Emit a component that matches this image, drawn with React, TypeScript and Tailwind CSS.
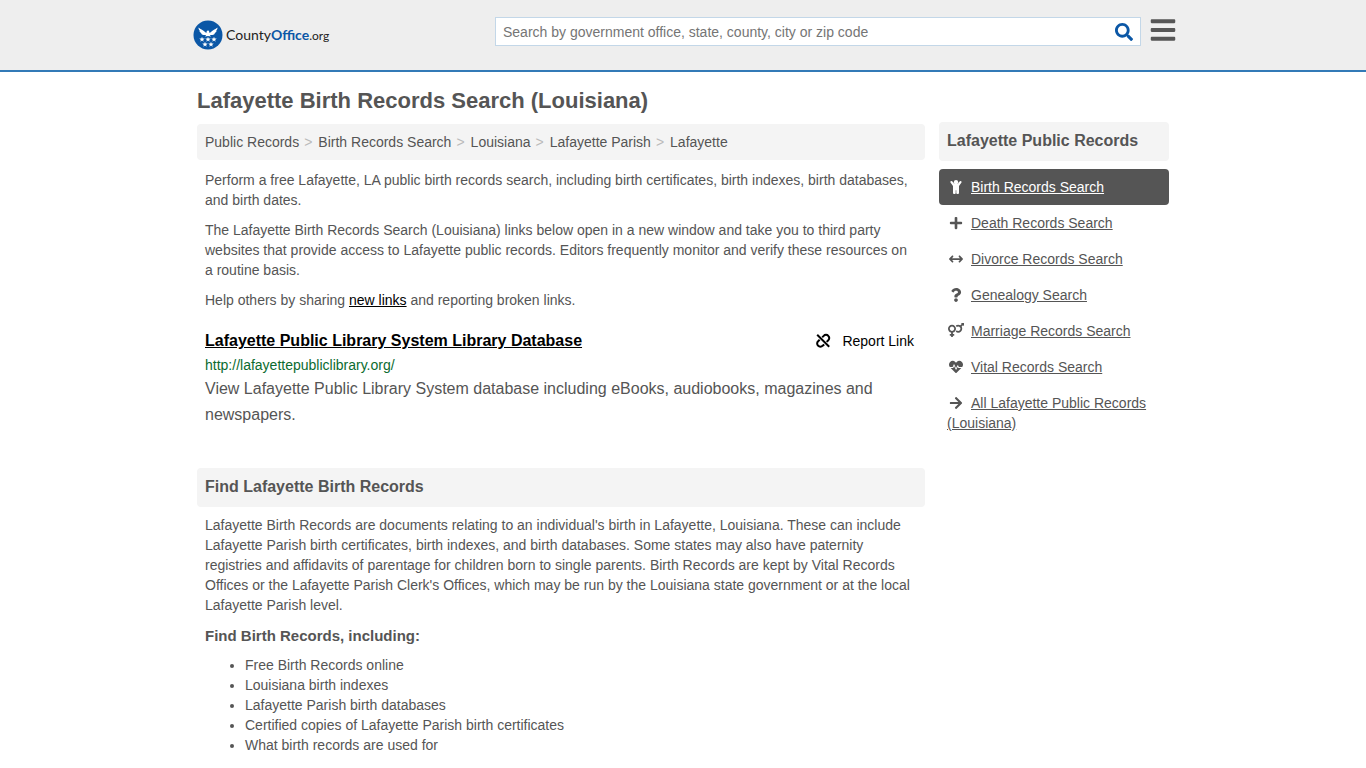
import type { ComponentType } from 'react';
import {
  FaArrowRight,
  FaBars,
  FaHeartbeat,
  FaPlus,
  FaQuestion,
  FaSearch,
  FaVenusMars,
} from 'react-icons/fa';
import { FaArrowsLeftRight } from 'react-icons/fa6';
import clsx from 'clsx';

type RecordLink = {
  label: string;
  icon: ComponentType<{ size?: number }>;
  size?: number;
  active?: boolean;
};

const BREADCRUMBS = [
  'Public Records',
  'Birth Records Search',
  'Louisiana',
  'Lafayette Parish',
  'Lafayette',
];

const RECORD_LINKS: RecordLink[] = [
  { label: 'Birth Records Search', icon: ChildIcon, active: true },
  { label: 'Death Records Search', icon: FaPlus },
  { label: 'Divorce Records Search', icon: FaArrowsLeftRight },
  { label: 'Genealogy Search', icon: FaQuestion },
  { label: 'Marriage Records Search', icon: FaVenusMars, size: 16 },
  { label: 'Vital Records Search', icon: FaHeartbeat },
  { label: 'All Lafayette Public Records (Louisiana)', icon: FaArrowRight },
];

const TOPICS = [
  'Free Birth Records online',
  'Louisiana birth indexes',
  'Lafayette Parish birth databases',
  'Certified copies of Lafayette Parish birth certificates',
  'What birth records are used for',
];

const STAR =
  'M0-2.800.700-.9 2.700-.9 1.100.4 1.700 2.300 0 1.100-1.700 2.300-1.100.4-2.700-.9-.7-.9Z';

export default function App() {
  return (
    <div className="bg-white font-['Liberation_Sans',Arial,sans-serif] text-sm leading-5 text-[#555]">
      <Header />
      <div className="mx-auto flex max-w-[980px] gap-3.5 px-1">
        <main className="min-w-0 flex-1 pt-[17px]">
          <h1 className="text-[22px] leading-6 font-bold">
            Lafayette Birth Records Search (Louisiana)
          </h1>
          <Breadcrumbs />
          <Intro />
          <Result />
          <About />
        </main>
        <Sidebar />
      </div>
    </div>
  );
}

function Header() {
  return (
    <header className="border-b-2 border-[#337ab7] bg-[#eee]">
      <div className="mx-auto flex h-[70px] max-w-[980px] items-start">
        <a href="#" className="mt-5 flex items-center gap-[3px]">
          <Logo />
          <span className="font-[Lato,sans-serif] text-sm text-[#222]">
            County<b className="text-[#0b57a6]">Office</b>
            <span className="text-xs">.org</span>
          </span>
        </a>
        <form
          role="search"
          className="mt-[17px] ml-auto flex h-[29px] w-[646px] items-center border border-[#c3d7e8] bg-white"
        >
          <input
            type="text"
            aria-label="Search"
            placeholder="Search by government office, state, county, city or zip code"
            className="min-w-0 flex-1 px-[7px] outline-none placeholder:text-[#757575]"
          />
          <button type="submit" aria-label="Search" className="px-[7px] text-[#0b57a6]">
            <FaSearch size={18} />
          </button>
        </form>
        <button
          type="button"
          aria-label="Menu"
          className="-mr-0.5 ml-2 mt-4 w-[26px] text-[#555]"
        >
          <FaBars size={28} />
        </button>
      </div>
    </header>
  );
}

function Logo() {
  return (
    <svg viewBox="0 0 30 30" className="size-[30px]" aria-hidden="true">
      <circle cx="15" cy="15" r="14.5" fill="#0b57a6" />
      {/* eagle with spread wings */}
      <path
        fill="#fff"
        d="M5.500 7.500C7.500 9.500 10.500 9.800 12.600 12.600L13.600 12.800 13.700 11.200C14.200 10.300 15.400 10.200 16.500 11L15.900 11.600 16.400 12.800 17.400 12.600C19.500 9.800 22.500 9.500 24.500 7.500 24.500 9.200 23.800 10.300 22.900 11L23.700 11C23 12.300 22.200 13 21.300 13.300L22 13.500C21.100 14.600 19.800 15 18.300 15L16.800 14.900 18 16.600 15 16 12 16.600 13.200 14.900 11.700 15C10.200 15 8.900 14.600 8 13.500L8.700 13.300C7.800 13 7 12.300 6.300 11L7.100 11C6.200 10.300 5.500 9.200 5.500 7.500Z"
      />
      <g fill="#fff">
        <path transform="translate(9 19.500)" d={STAR} />
        <path transform="translate(15 19.500)" d={STAR} />
        <path transform="translate(21 19.500)" d={STAR} />
        <path transform="translate(12 24.500)" d={STAR} />
        <path transform="translate(18 24.500)" d={STAR} />
      </g>
    </svg>
  );
}

function Breadcrumbs() {
  return (
    <nav aria-label="Breadcrumb" className="mt-[11px] rounded bg-[#f4f4f4] p-2">
      <ol className="flex flex-wrap">
        {BREADCRUMBS.map((crumb, i) => (
          <li key={crumb}>
            {i > 0 && <span className="pr-1.5 pl-[5px] text-[#bbb]">&gt;</span>}
            <a href="#">{crumb}</a>
          </li>
        ))}
      </ol>
    </nav>
  );
}

function Intro() {
  return (
    <section className="space-y-2.5 px-2 pt-2.5">
      <p>
        Perform a free Lafayette, LA public birth records search, including
        birth certificates, birth indexes, birth databases, and birth dates.
      </p>
      <p>
        The Lafayette Birth Records Search (Louisiana) links below open in a new
        window and take you to third party websites that provide access to
        Lafayette public records. Editors frequently monitor and verify these
        resources on a routine basis.
      </p>
      <p>
        Help others by sharing{' '}
        <a href="#" className="text-black underline">
          new links
        </a>{' '}
        and reporting broken links.
      </p>
    </section>
  );
}

function Result() {
  return (
    <article className="px-2 pt-[21px]">
      <div className="flex items-center justify-between">
        <a href="#" className="text-base leading-5 font-bold text-black underline">
          Lafayette Public Library System Library Database
        </a>
        <button type="button" className="mr-[3px] flex items-center gap-[11px] text-black">
          <BrokenLinkIcon />
          Report Link
        </button>
      </div>
      <div className="mt-1 text-[#0b6b2f]">http://lafayettepubliclibrary.org/</div>
      <p className="mt-px text-base leading-[26px]">
        View Lafayette Public Library System database including eBooks,
        audiobooks, magazines and newspapers.
      </p>
    </article>
  );
}

function BrokenLinkIcon() {
  return (
    <svg
      viewBox="0 0 16 16"
      className="size-4"
      fill="none"
      stroke="currentColor"
      strokeWidth="2"
      aria-hidden="true"
    >
      <path d="M2.200 1.800l12 12" />
      <path d="M7.200 4.200l1.500-1.300a3 3 0 0 1 4.600 0 3 3 0 0 1 0 4.400L11.700 8.900" />
      <path d="M9.200 11.400l-1.500 1.300a3 3 0 0 1-4.600 0 3 3 0 0 1 0-4.400L4.700 6.700" />
    </svg>
  );
}

function ChildIcon({ size = 14 }: { size?: number }) {
  return (
    <svg
      viewBox="0 0 14 14"
      width={size}
      height={size}
      fill="currentColor"
      aria-hidden="true"
    >
      <circle cx="7" cy="2.200" r="2.200" />
      <path d="M1.600 1.300a1.100 1.100 0 0 1 1.600 0L5.300 4h3.400l2.100-2.700a1.100 1.100 0 0 1 1.700 1.300L10 5.900V13a1 1 0 0 1-1 1h-.7a1 1 0 0 1-1-1v-2.800h-.6V13a1 1 0 0 1-1 1H5a1 1 0 0 1-1-1V5.900L1.500 2.600a1.100 1.100 0 0 1 .1-1.300Z" />
    </svg>
  );
}

function About() {
  return (
    <section className="pt-10 pb-3">
      <h2 className="rounded bg-[#f4f4f4] px-2 pt-[9px] pb-2.5 text-base leading-5 font-bold">
        Find Lafayette Birth Records
      </h2>
      <div className="px-2 pt-2">
        <p>
          Lafayette Birth Records are documents relating to an individual's
          birth in Lafayette, Louisiana. These can include Lafayette Parish
          birth certificates, birth indexes, and birth databases. Some states
          may also have paternity registries and affidavits of parentage for
          children born to single parents. Birth Records are kept by Vital
          Records Offices or the Lafayette Parish Clerk's Offices, which may be
          run by the Louisiana state government or at the local Lafayette Parish
          level.
        </p>
        <h3 className="mt-[11px] text-[15px] leading-5 font-bold">
          Find Birth Records, including:
        </h3>
        <ul className="mt-[9px] list-disc pl-10">
          {TOPICS.map((topic) => (
            <li key={topic}>{topic}</li>
          ))}
        </ul>
      </div>
    </section>
  );
}

function Sidebar() {
  return (
    <aside className="w-[230px] shrink-0 pt-[50px]">
      <h2 className="rounded bg-[#f4f4f4] px-2 pt-[9px] pb-2.5 text-base leading-5 font-bold">
        Lafayette Public Records
      </h2>
      <ul className="mt-2">
        {RECORD_LINKS.map(({ label, icon: Icon, size = 14, active }) => (
          <li
            key={label}
            className={clsx('rounded p-2', active && 'bg-[#555] text-white')}
          >
            <span className="mr-1.5 inline-flex h-3.5 w-[18px] items-center justify-center align-[-2px]">
              <Icon size={size} />
            </span>
            <a href="#" className="underline">
              {label}
            </a>
          </li>
        ))}
      </ul>
    </aside>
  );
}
